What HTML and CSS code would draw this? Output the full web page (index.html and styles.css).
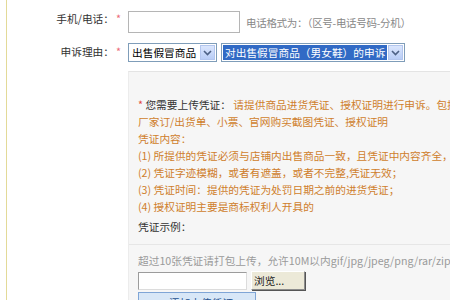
FILE: index.html
```html
<!DOCTYPE html>
<html lang="zh-CN">
<head>
    <meta charset="UTF-8">
    <title>申诉表单</title>
    <link rel="stylesheet" href="styles.css">
</head>
<body>
    <div class="page">
        <div class="row row-phone">
            <label class="label">手机/电话：<em>*</em></label>
            <input class="text-input" type="text">
            <span class="hint">电话格式为：（区号-电话号码-分机）</span>
        </div>

        <div class="row row-reason">
            <label class="label">申诉理由：<em>*</em></label>
            <div class="select sel-type">
                <span class="sel-text">出售假冒商品</span>
                <span class="sel-arrow"><svg width="9" height="6" viewBox="0 0 9 6"><path d="M1 1 L4.5 4.5 L8 1" fill="none" stroke="#4d6185" stroke-width="1.6"/></svg></span>
            </div>
            <div class="select sel-detail">
                <span class="sel-text picked">对出售假冒商品（男女鞋）的申诉</span>
                <span class="sel-arrow"><svg width="9" height="6" viewBox="0 0 9 6"><path d="M1 1 L4.5 4.5 L8 1" fill="none" stroke="#4d6185" stroke-width="1.6"/></svg></span>
            </div>
        </div>

        <div class="evidence">
            <div class="notes">
                <p><em>*</em> <b>您需要上传凭证：</b> <span class="orange">请提供商品进货凭证、授权证明进行申诉。包括</span></p>
                <p class="orange">厂家订/出货单、小票、官网购买截图凭证、授权证明</p>
                <p class="orange">凭证内容：</p>
                <p class="orange">(1) 所提供的凭证必须与店铺内出售商品一致，且凭证中内容齐全，</p>
                <p class="orange">(2) 凭证字迹模糊，或者有遮盖，或者不完整,凭证无效；</p>
                <p class="orange">(3) 凭证时间：提供的凭证为处罚日期之前的进货凭证；</p>
                <p class="orange">(4) 授权证明主要是商标权利人开具的</p>
            </div>
            <p class="sample">凭证示例：</p>
            <div class="divider"></div>
            <p class="upload-hint">超过10张凭证请打包上传，允许10M以内gif/jpg/jpeg/png/rar/zip/doc</p>
            <div class="file-row">
                <span class="file-path"></span>
                <button class="browse" type="button">浏览...</button>
            </div>
            <button class="add-btn" type="button">+ 添加上传凭证</button>
        </div>
    </div>
</body>
</html>
```

FILE: styles.css
```css
body, html {
    margin: 0;
    padding: 0;
    background: #fff;
    font-family: "Noto Sans CJK SC", "DejaVu Sans", sans-serif;
    font-size: 10.7px;
    color: #333;
    overflow: hidden;
    height: 300px;
}

.page {
    margin-left: 6px;
    border-left: 1px solid #e3da98;
    height: 300px;
}

.row {
    display: flex;
    align-items: flex-start;
    white-space: nowrap;
}

.row-phone {
    padding-top: 10px;
}

.row-reason {
    margin-top: 10px;
}

.label {
    width: 114px;
    margin-right: 7px;
    text-align: right;
    line-height: 17px;
}

.label em {
    font-style: normal;
    color: #ec6a78;
    margin-left: 2px;
}

.text-input {
    box-sizing: border-box;
    width: 112px;
    height: 22px;
    margin: 1px 0 0;
    border: 1px solid #b5b5b5;
    padding: 0 3px;
}

.hint {
    margin: 4px 0 0 6px;
    line-height: 17px;
    font-size: 10.5px;
    letter-spacing: -0.3px;
    color: #888;
}

.select {
    box-sizing: border-box;
    display: flex;
    align-items: center;
    height: 19px;
    border: 1px solid #7f9db9;
    background: #fff;
    padding: 1px;
}

.sel-type {
    width: 89px;
}

.sel-detail {
    width: 184px;
    margin-left: 4px;
}

.sel-text {
    flex: 1;
    line-height: 15px;
    padding: 0 2px;
    color: #000;
    overflow: hidden;
}

.sel-text.picked {
    background: #316ac5;
    color: #fff;
}

.sel-arrow {
    width: 15px;
    height: 15px;
    margin-left: 1px;
    display: flex;
    align-items: center;
    justify-content: center;
    background: linear-gradient(#dbe6fd, #b9cdf6);
    border: 1px solid #b3c6ee;
    box-sizing: border-box;
}

.evidence {
    margin: 9px 0 0 121px;
    background: #f6f6f6;
    border-top: 1px solid #e4e4e4;
    border-left: 1px solid #ececec;
    padding: 24px 0 0 9px;
    height: 300px;
    white-space: nowrap;
}

.evidence p {
    margin: 0;
    line-height: 17px;
}

.notes em {
    font-style: normal;
    color: #e2473f;
}

.notes b {
    font-weight: normal;
    color: #333;
}

.orange {
    color: #cf7e2c;
}

.sample {
    margin-top: 3px !important;
}

.divider {
    margin: 9px 0 0 -9px;
    border-top: 1px solid #e6e6e6;
}

.upload-hint {
    margin-top: 7px !important;
    color: #9a9a9a;
}

.file-row {
    display: flex;
    align-items: center;
    margin-top: 2px;
}

.file-path {
    box-sizing: border-box;
    width: 109px;
    height: 18px;
    background: #fff;
    border: 1px solid #9c9c9c;
    border-right-color: #dcdcdc;
    border-bottom-color: #dcdcdc;
}

.browse {
    box-sizing: border-box;
    height: 19px;
    width: 54px;
    margin-left: 4px;
    padding: 0 0 0 2px;
    text-align: left;
    font-family: inherit;
    font-size: 10.7px;
    color: #222;
    background: #ece9d8;
    border: 1px solid #fff;
    border-right-color: #8c8c8c;
    border-bottom-color: #8c8c8c;
    box-shadow: 1px 1px 0 #555;
}

.add-btn {
    display: block;
    box-sizing: border-box;
    width: 118px;
    height: 20px;
    margin-top: 2px;
    font-family: inherit;
    font-size: 10.7px;
    color: #24508f;
    background: #d8e7f7;
    border: 1px solid #7fa5d6;
    padding: 0;
}
```
